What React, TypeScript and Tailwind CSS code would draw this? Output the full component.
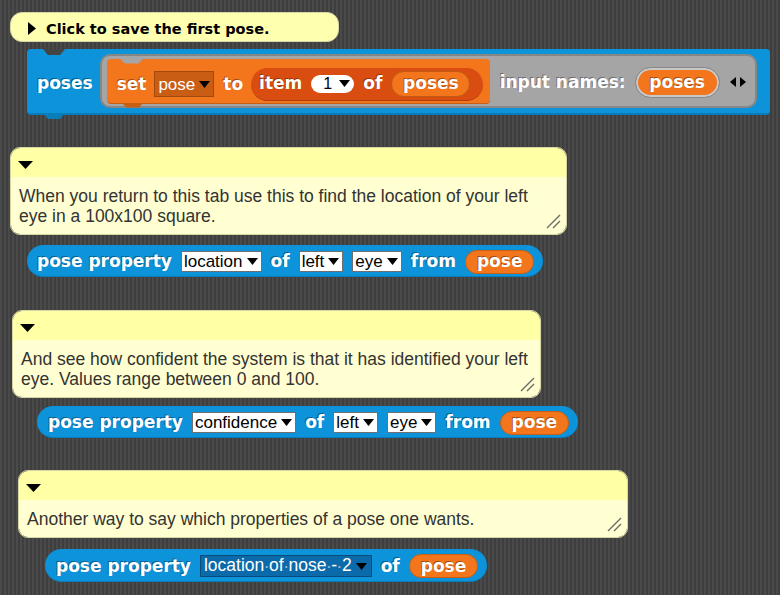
import React from "react";

const LBL =
  "font-['DejaVu_Sans',sans-serif] font-bold text-[17px] text-white [text-shadow:-1px_-1px_0_rgba(0,0,0,0.35)] leading-none whitespace-nowrap";
const TXT = "font-['Liberation_Sans',Arial,sans-serif]";

function Down({ className = "" }: { className?: string }) {
  return (
    <svg width="11" height="7" viewBox="0 0 11 7" className={className}>
      <path d="M0 0H11L5.5 7Z" fill="currentColor" />
    </svg>
  );
}

function Dropdown({ text }: { text: string }) {
  return (
    <div
      className={`h-[21px] flex items-center gap-[4px] pl-[2px] pr-[3px] bg-white border border-[#6f6f6f] ${TXT} text-[17px] leading-none text-black`}
    >
      <span>{text}</span>
      <Down />
    </div>
  );
}

function PoseVar() {
  return (
    <div className="h-[24px] px-[11px] rounded-full bg-[#f3761d] border border-[#c95f12] flex items-center">
      <span className={LBL}>pose</span>
    </div>
  );
}

function Resize() {
  return (
    <svg
      width="16"
      height="16"
      viewBox="0 0 16 16"
      className="absolute right-[5px] bottom-[5px]"
    >
      <path d="M15 2L2 15M15 8L8 15" stroke="#6b6b6b" strokeWidth="1.4" />
    </svg>
  );
}

function Comment({
  className,
  children,
}: {
  className: string;
  children: React.ReactNode;
}) {
  return (
    <div
      className={`relative rounded-[10px] overflow-hidden border border-[#d6d6a4] ${className}`}
    >
      <div className="h-[29px] bg-[#ffffa6] flex items-center pl-[7px] pt-[4px]">
        <svg width="15" height="8" viewBox="0 0 15 8">
          <path d="M0 0H15L7.5 8Z" fill="#000" />
        </svg>
      </div>
      <div
        className={`bg-[#ffffd2] px-[8px] pt-[9px] pb-[8px] ${TXT} text-[17.5px] leading-[20px] text-[#333]`}
      >
        {children}
      </div>
      <Resize />
    </div>
  );
}

function Dot() {
  return (
    <span className="mx-[1px] text-[#9bb7cc] text-[8px] align-middle">•</span>
  );
}

export default function App() {
  return (
    <div className="w-[780px] h-[595px] overflow-hidden bg-[#444444] bg-[repeating-linear-gradient(90deg,#4a4a4a_0px,#4a4a4a_2px,#3e3e3e_2px,#3e3e3e_4px)] flex flex-col items-start">
      {/* collapsed comment */}
      <div className="mt-[12px] ml-[10px] w-[329px] h-[30px] rounded-[12px] bg-[#ffffb0] border border-[#d6d6a4] flex items-center pl-[17px] pt-[4px]">
        <svg width="8" height="13" viewBox="0 0 8 13" className="relative -top-[1px]">
          <path d="M0 0L8 6.5L0 13Z" fill="#000" />
        </svg>
        <span className="ml-[10px] font-['DejaVu_Sans',sans-serif] font-bold text-[14.5px] text-black leading-none whitespace-nowrap">
          Click to save the first pose.
        </span>
      </div>

      {/* poses command block */}
      <div className="relative mt-[7px] ml-[27px] w-[743px] h-[66px] bg-[#0d93da] rounded-[4px] border-b-2 border-[#0a7cba] flex items-center pl-[10px]">
        <div className="absolute top-0 left-[16px] w-[22px] h-[6px] bg-[#444444] [clip-path:polygon(0_0,100%_0,78%_100%,22%_100%)]" />
        <div className="absolute top-full left-[16px] w-[22px] h-[6px] bg-[#0a7cba] [clip-path:polygon(0_0,100%_0,78%_100%,22%_100%)]" />
        <span className={`${LBL} relative top-[2px]`}>poses</span>
        <div className="ml-[7px] mr-[13px] flex-1 h-[54px] rounded-[10px] bg-[#a5a5a5] border-2 border-[#878787] flex items-center pl-[5px]">
          {/* set block */}
          <div className="relative w-[383px] h-[45px] bg-[#f3761d] rounded-[4px] border-b border-[#c75f12] flex items-center pl-[10px] pt-[7px] gap-[8px]">
            <div className="absolute top-0 left-[13px] w-[24px] h-[5px] bg-[#a5a5a5] [clip-path:polygon(0_0,100%_0,78%_100%,22%_100%)]" />
            <div className="absolute top-full left-[15px] w-[22px] h-[5px] bg-[#c75f12] [clip-path:polygon(0_0,100%_0,78%_100%,22%_100%)]" />
            <span className={LBL}>set</span>
            <div
              className={`h-[26px] flex items-center gap-[4px] pl-[3px] pr-[3px] bg-[#c95d14] border border-[#a04a0e] ${TXT} text-[17px] leading-none text-white`}
            >
              <span>pose</span>
              <Down className="text-black" />
            </div>
            <span className={`${LBL} ml-[1px]`}>to</span>
            <div className="h-[33px] rounded-full bg-[#d94d11] border-b border-[#b03c0c] flex items-center gap-[9px] pl-[8px] pr-[13px]">
              <span className={LBL}>item</span>
              <div
                className={`h-[18px] w-[43px] rounded-full bg-white flex items-center justify-between pl-[12px] pr-[4px] ${TXT} text-[16px] leading-none text-black`}
              >
                <span>1</span>
                <Down />
              </div>
              <span className={LBL}>of</span>
              <div className="h-[26px] w-[79px] rounded-full bg-[#f3761d] border border-[#bf5a10] flex items-center justify-center">
                <span className={LBL}>poses</span>
              </div>
            </div>
          </div>
          <span className={`${LBL} ml-[10px] relative top-[1px]`}>input names:</span>
          <div className="ml-[10px] h-[29px] w-[83px] rounded-full bg-[#f3761d] border-2 border-[#c9c9c9] outline outline-1 outline-[#888] flex items-center justify-center relative top-[1px]">
            <span className={LBL}>poses</span>
          </div>
          <div className="ml-[11px] flex items-center gap-[4px] relative top-[1px]">
            <svg width="6" height="10" viewBox="0 0 6 10">
              <path d="M6 0L0 5L6 10Z" fill="#000" />
            </svg>
            <svg width="6" height="10" viewBox="0 0 6 10">
              <path d="M0 0L6 5L0 10Z" fill="#000" />
            </svg>
          </div>
        </div>
      </div>

      <Comment className="mt-[32px] ml-[10px] w-[557px]">
        When you return to this tab use this to find the location of your left
        <br />
        eye in a 100x100 square.
      </Comment>

      <div className="mt-[10px] ml-[27px] h-[32px] rounded-full bg-[#0d93da] border-b border-[#0a7cba] flex items-center gap-[9px] pl-[10px] pr-[9px] pt-[2px]">
        <span className={LBL}>pose property</span>
        <Dropdown text="location" />
        <span className={LBL}>of</span>
        <Dropdown text="left" />
        <Dropdown text="eye" />
        <span className={LBL}>from</span>
        <PoseVar />
      </div>

      <Comment className="mt-[33px] ml-[12px] w-[529px]">
        And see how confident the system is that it has identified your left
        <br />
        eye. Values range between 0 and 100.
      </Comment>

      <div className="mt-[8px] ml-[37px] h-[32px] rounded-full bg-[#0d93da] border-b border-[#0a7cba] flex items-center gap-[9px] pl-[11px] pr-[9px] pt-[2px]">
        <span className={LBL}>pose property</span>
        <Dropdown text="confidence" />
        <span className={LBL}>of</span>
        <Dropdown text="left" />
        <Dropdown text="eye" />
        <span className={LBL}>from</span>
        <PoseVar />
      </div>

      <Comment className="mt-[32px] ml-[18px] w-[610px]">
        Another way to say which properties of a pose one wants.
      </Comment>

      <div className="mt-[11px] ml-[45px] h-[33px] rounded-full bg-[#0d93da] border-b border-[#0a7cba] flex items-center gap-[9px] pl-[11px] pr-[9px] pt-[2px]">
        <span className={LBL}>pose property</span>
        <div
          className={`h-[22px] flex items-center gap-[4px] pl-[3px] pr-[4px] bg-[#0b6aa9] border border-[#084c7a] ${TXT} text-[17.5px] leading-none text-white`}
        >
          <span className="whitespace-nowrap">
            location
            <Dot />
            of
            <Dot />
            nose
            <Dot />-<Dot />2
          </span>
          <Down className="text-black" />
        </div>
        <span className={LBL}>of</span>
        <PoseVar />
      </div>
    </div>
  );
}
